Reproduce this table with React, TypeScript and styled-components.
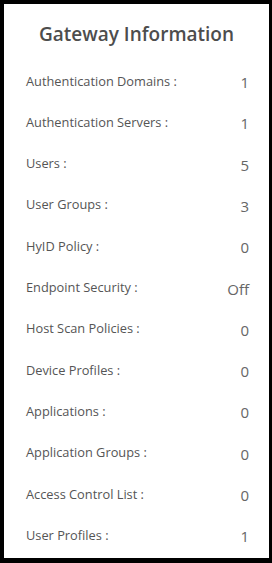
import React, { FC } from 'react';
import styled, { createGlobalStyle } from 'styled-components';

const GlobalStyle = createGlobalStyle`
  html, body {
    margin: 0;
    padding: 0;
    background: #000;
  }

  body {
    font-family: 'Open Sans', 'Noto Sans', sans-serif;
  }
`;

const Frame = styled.div`
  width: 272px;
  height: 563px;
  box-sizing: border-box;
  padding: 4px 3px 5px 4px;
  background: #000;
`;

const Card = styled.section`
  height: 100%;
  background: #fff;
  display: flex;
  flex-direction: column;
`;

const Title = styled.h2`
  margin: 0 0 26.6px;
  padding-top: 19px;
  text-align: center;
  font-size: 19px;
  font-weight: 600;
  color: #4d4d4d;
  line-height: 22px;
`;

const List = styled.ul`
  list-style: none;
  margin: 0;
  padding: 0 20px 0 22px;
  display: grid;
  grid-auto-rows: 41.3px;
`;

const Row = styled.li`
  display: flex;
  justify-content: space-between;
  align-items: flex-start;
`;

const Label = styled.span`
  font-size: 12.8px;
  line-height: 18px;
  color: #555;
`;

const Value = styled.span`
  font-size: 15px;
  line-height: 18px;
  margin-top: 1.5px;
  color: #666;
`;

interface Stat {
  label: string;
  value: string;
}

const stats: Stat[] = [
  { label: 'Authentication Domains', value: '1' },
  { label: 'Authentication Servers', value: '1' },
  { label: 'Users', value: '5' },
  { label: 'User Groups', value: '3' },
  { label: 'HyID Policy', value: '0' },
  { label: 'Endpoint Security', value: 'Off' },
  { label: 'Host Scan Policies', value: '0' },
  { label: 'Device Profiles', value: '0' },
  { label: 'Applications', value: '0' },
  { label: 'Application Groups', value: '0' },
  { label: 'Access Control List', value: '0' },
  { label: 'User Profiles', value: '1' },
];

const App: FC = () => (
  <>
    <GlobalStyle />
    <Frame>
      <Card>
        <Title>Gateway Information</Title>
        <List>
          { stats.map(stat => (
            <Row key={ stat.label }>
              <Label>{ `${ stat.label } :` }</Label>
              <Value>{ stat.value }</Value>
            </Row>
          )) }
        </List>
      </Card>
    </Frame>
  </>
);

export default App;
